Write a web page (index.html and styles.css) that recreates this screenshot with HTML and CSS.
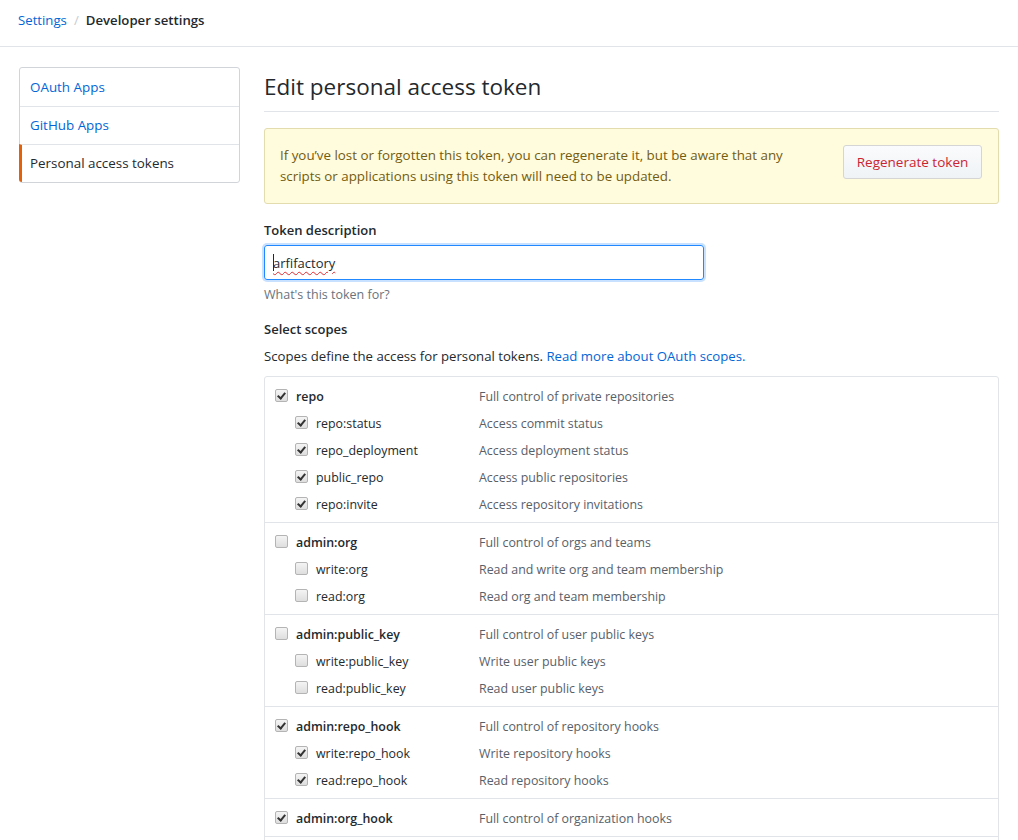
FILE: index.html
```html
<!DOCTYPE html>
<html>
<head>
<meta charset="utf-8">
<link rel="stylesheet" href="styles.css">
</head>
<body>
<header class="topbar">
  <nav class="crumbs"><a href="#">Settings</a><span class="sep">/</span><strong>Developer settings</strong></nav>
</header>
<div class="layout">
  <aside class="menu">
    <a class="menu-item" href="#">OAuth Apps</a>
    <a class="menu-item" href="#">GitHub Apps</a>
    <a class="menu-item selected" href="#">Personal access tokens</a>
  </aside>
  <main class="main">
    <h1 class="title">Edit personal access token</h1>
    <div class="flash">
      <p>If you’ve lost or forgotten this token, you can regenerate it, but be aware that any scripts or applications using this token will need to be updated.</p>
      <button class="btn-danger">Regenerate token</button>
    </div>
    <div class="field">
      <label class="label">Token description</label>
      <div class="input"><span class="caret"></span><span class="misspelled">arfifactory</span></div>
      <p class="note">What's this token for?</p>
    </div>
    <div class="field">
      <label class="label">Select scopes</label>
      <p class="desc">Scopes define the access for personal tokens. <a href="#">Read more about OAuth scopes.</a></p>
    </div>
    <div class="scopes">
      <div class="group">
        <div class="row parent"><span class="cb on"></span><span class="name">repo</span><span class="text">Full control of private repositories</span></div>
        <div class="row child"><span class="cb on"></span><span class="name">repo:status</span><span class="text">Access commit status</span></div>
        <div class="row child"><span class="cb on"></span><span class="name">repo_deployment</span><span class="text">Access deployment status</span></div>
        <div class="row child"><span class="cb on"></span><span class="name">public_repo</span><span class="text">Access public repositories</span></div>
        <div class="row child"><span class="cb on"></span><span class="name">repo:invite</span><span class="text">Access repository invitations</span></div>
      </div>
      <div class="group">
        <div class="row parent"><span class="cb"></span><span class="name">admin:org</span><span class="text">Full control of orgs and teams</span></div>
        <div class="row child"><span class="cb"></span><span class="name">write:org</span><span class="text">Read and write org and team membership</span></div>
        <div class="row child"><span class="cb"></span><span class="name">read:org</span><span class="text">Read org and team membership</span></div>
      </div>
      <div class="group">
        <div class="row parent"><span class="cb"></span><span class="name">admin:public_key</span><span class="text">Full control of user public keys</span></div>
        <div class="row child"><span class="cb"></span><span class="name">write:public_key</span><span class="text">Write user public keys</span></div>
        <div class="row child"><span class="cb"></span><span class="name">read:public_key</span><span class="text">Read user public keys</span></div>
      </div>
      <div class="group">
        <div class="row parent"><span class="cb on"></span><span class="name">admin:repo_hook</span><span class="text">Full control of repository hooks</span></div>
        <div class="row child"><span class="cb on"></span><span class="name">write:repo_hook</span><span class="text">Write repository hooks</span></div>
        <div class="row child"><span class="cb on"></span><span class="name">read:repo_hook</span><span class="text">Read repository hooks</span></div>
      </div>
      <div class="group">
        <div class="row parent"><span class="cb on"></span><span class="name">admin:org_hook</span><span class="text">Full control of organization hooks</span></div>
      </div>
      <div class="group empty"></div>
    </div>
  </main>
</div>
</body>
</html>
```
FILE: styles.css
```css
html, body { margin: 0; padding: 0; background: #fff; }
body {
  font-family: "Open Sans", "Noto Sans", sans-serif;
  font-size: 13px;
  color: #24292e;
  overflow: hidden;
  height: 840px;
}
a { color: #0366d6; text-decoration: none; }
.topbar {
  height: 47px;
  border-bottom: 1px solid #e1e4e8;
  box-sizing: border-box;
  display: flex;
  align-items: center;
  padding-left: 18px;
  padding-bottom: 7px;
}
.crumbs { font-size: 13.2px; }
.crumbs .sep { color: #c6cbd1; margin: 0 7px; }
.crumbs strong { font-weight: 600; color: #24292e; }
.layout {
  display: flex;
  padding: 20px 19px 0 19px;
  gap: 24px;
}
.menu {
  width: 221px;
  flex: none;
  align-self: flex-start;
  border: 1px solid #d1d5da;
  border-radius: 3px;
  display: flex;
  flex-direction: column;
  box-sizing: border-box;
}
.menu-item {
  height: 38px;
  line-height: 36px;
  padding-top: 0;
  padding-left: 10px;
  border-top: 1px solid #e1e4e8;
  font-size: 13.4px;
  box-sizing: border-box;
}
.menu-item:first-child { border-top: 0; padding-top: 1px; }
.menu-item.selected {
  color: #24292e;
  border-left: 3px solid #e36209;
  padding-left: 8px;
  margin-left: -1px;
  border-radius: 0 0 0 3px;
}
.main { flex: 1; min-width: 0; }
.title {
  margin: 0;
  font-size: 22.5px;
  font-weight: 400;
  line-height: 40px;
  padding-bottom: 4px;
  border-bottom: 1px solid #e1e4e8;
  color: #24292e;
}
.flash {
  margin-top: 16px;
  background: #fffbdd;
  border: 1px solid #e2dcae;
  border-radius: 3px;
  display: flex;
  align-items: center;
  justify-content: space-between;
  padding: 16px 16px 16px 15px;
  color: #735c0f;
}
.flash p { margin: 0; width: 530px; line-height: 21px; font-size: 13.35px; }
.btn-danger {
  align-self: flex-start;
  font-family: inherit;
  font-size: 13.5px;
  font-weight: 500;
  color: #cb2431;
  background: linear-gradient(#fafbfc, #eff3f6);
  border: 1px solid #d5d5d5;
  border-radius: 3px;
  width: 139px;
  height: 34px;
  padding: 0;
}
.field { margin-top: 16px; }
.label { display: block; font-weight: 600; line-height: 20px; }
.input {
  margin-top: 5px;
  width: 440px;
  height: 35px;
  box-sizing: border-box;
  border: 1px solid #2188ff;
  border-radius: 3px;
  box-shadow: 0 0 0 2px #c8e1ff;
  display: flex;
  align-items: center;
  padding-left: 8px;
  color: #24292e;
}
.caret { width: 1px; height: 17px; background: #24292e; margin-right: -1px; }
.misspelled { text-decoration: underline wavy #e0282e; text-decoration-thickness: 1px; text-underline-offset: 3px; }
.note { margin: 6px 0 0; color: #6a737d; font-size: 12.5px; }
.desc { margin: 8px 0 0; font-size: 13.2px; }
.scopes {
  margin-top: 11px;
  border: 1px solid #e1e4e8;
  border-radius: 3px;
  font-size: 12.4px;
}
.group { padding: 6px 0 4px; border-top: 1px solid #e1e4e8; }
.group:first-child { border-top: 0; }
.group.empty { height: 20px; padding: 0; }
.row { display: flex; align-items: center; height: 27px; }
.row .cb { margin-left: 10px; }
.row.child .cb { margin-left: 30px; }
.row .name { margin-left: 8px; width: 183px; }
.row.child .name { width: 163px; }
.row.parent .name { font-weight: 600; }
.row .text { color: #586069; }
.cb {
  width: 11px;
  height: 11px;
  border: 1px solid #b4b4b4;
  border-radius: 2px;
  background: linear-gradient(#f4f4f4, #dedede);
  position: relative;
  flex: none;
  margin-top: -2px;
}
.cb.on::after {
  content: "";
  position: absolute;
  left: 3px;
  top: 1px;
  width: 3px;
  height: 6px;
  border: solid #333;
  border-width: 0 2px 2px 0;
  transform: rotate(40deg);
}
```
